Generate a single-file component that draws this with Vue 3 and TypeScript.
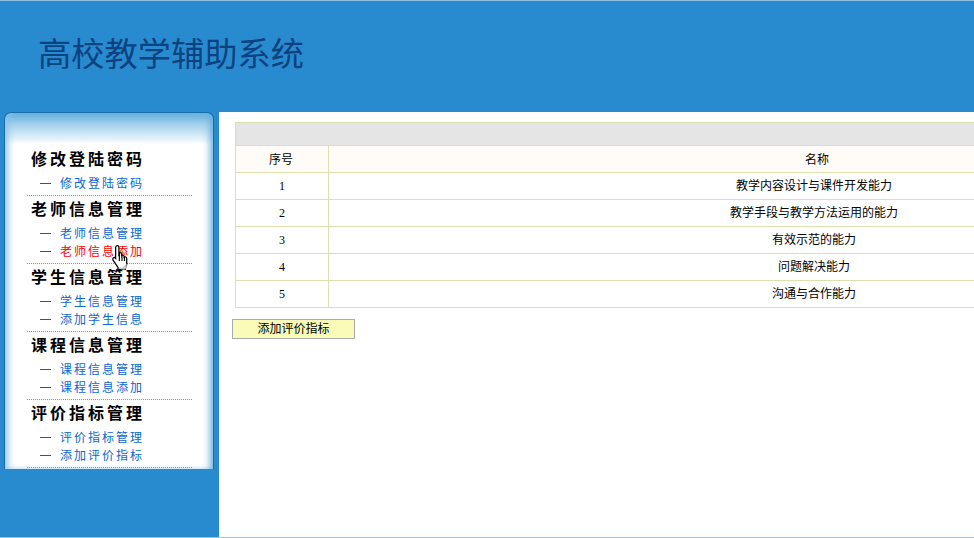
<script setup lang="ts">
interface Group { title: string; items: string[] }
const groups: Group[] = [
  { title: '修改登陆密码', items: ['修改登陆密码'] },
  { title: '老师信息管理', items: ['老师信息管理', '老师信息添加'] },
  { title: '学生信息管理', items: ['学生信息管理', '添加学生信息'] },
  { title: '课程信息管理', items: ['课程信息管理', '课程信息添加'] },
  { title: '评价指标管理', items: ['评价指标管理', '添加评价指标'] },
]
const rows: string[] = [
  '教学内容设计与课件开发能力',
  '教学手段与教学方法运用的能力',
  '有效示范的能力',
  '问题解决能力',
  '沟通与合作能力',
]
const hovered = '老师信息添加'
</script>

<template>
  <div class="page">
    <header class="top">
      <h1 class="title">高校教学辅助系统</h1>
    </header>
    <div class="body">
      <aside class="side">
        <nav class="panel">
          <section v-for="g in groups" :key="g.title" class="group">
            <h2 class="group-title">{{ g.title }}</h2>
            <ul class="links">
              <li v-for="it in g.items" :key="it" class="link" :class="{ hover: it === hovered }">
                <span class="dash"></span>
                <a class="link-text">{{ it }}</a>
              </li>
            </ul>
          </section>
        </nav>
        <svg class="cursor" width="19" height="26" viewBox="0 0 16 23">
          <path d="M5 1.500c1 0 1.600.7 1.600 1.700v7l.4-.2V7.800c1-.6 2 0 2 .9v1.500c1-.7 2.100-.3 2.200.8v.7c1-.6 2.200-.2 2.300.9v5.400c0 1.200-.7 2.300-1.300 3.300v1.200H5.800v-1.700L1.700 14.700c-.8-1-.7-2 .1-2.500.8-.5 1.500-.1 1.900.4V3.200c0-1 .4-1.700 1.300-1.700z" fill="#fff" stroke="#000" stroke-width="1.100"/>
          <path d="M7 10v5M9.300 10.500V15M11.500 11.500V15" stroke="#000" stroke-width="1" fill="none"/>
          <path d="M13.500 17.500v3L12 22.500H8z" fill="#c4c4c4"/>
        </svg>
      </aside>
      <main class="main">
        <table class="grid">
          <colgroup>
            <col class="col-a" />
            <col />
          </colgroup>
          <thead>
            <tr><th colspan="2" class="band"></th></tr>
            <tr class="head"><th class="h-a">序号</th><th class="h-b">名称</th></tr>
          </thead>
          <tbody>
            <tr v-for="(r, i) in rows" :key="r">
              <td class="num">{{ i + 1 }}</td>
              <td class="name">{{ r }}</td>
            </tr>
          </tbody>
        </table>
        <button class="add" type="button">添加评价指标</button>
      </main>
    </div>
  </div>
</template>

<style>
html, body { margin: 0; padding: 0; overflow: hidden; background: #fff; }
</style>

<style scoped>
.page {
  width: 974px;
  height: 538px;
  overflow: hidden;
  display: flex;
  flex-direction: column;
  box-sizing: border-box;
  border-top: 1px solid #8fbfe3;
  border-bottom: 1px solid #a3c1da;
  font-family: "Liberation Serif", "Noto Sans CJK SC", serif;
  background: #fff;
}
.top {
  height: 111px;
  flex: none;
  background: #298bcf;
  display: flex;
  align-items: center;
  padding: 0 0 0 38px;
  box-sizing: border-box;
}
.title {
  margin: 0 0 10px;
  font: 400 33.25px/40px "Noto Sans CJK SC", sans-serif;
  color: #0c4280;
}
.body {
  flex: 1;
  display: flex;
  min-height: 0;
}
.side {
  position: relative;
  width: 219px;
  flex: none;
  background: #298bcf;
  padding-left: 4px;
  box-sizing: border-box;
}
.panel {
  width: 210px;
  height: 357px;
  box-sizing: border-box;
  padding: 33px 21px 0 22px;
  overflow: hidden;
  border: 1px solid #1a6ca6;
  border-bottom: 0;
  border-radius: 7px 7px 0 0;
  background:
    linear-gradient(#fff, #fff) 8px 31px / 192px 100% no-repeat,
    linear-gradient(#62aedd 0, #a6d2ec 12px, #e4f2fa 26px, #fff 31px);
  box-shadow: inset 6px 0 7px -3px #8cc3e8, inset -6px 0 7px -3px #6aaedd;
}
.group {
  border-bottom: 1px dotted #6f9fb5;
  padding-bottom: 3px;
}
.group-title {
  margin: 0;
  height: 28px;
  padding-left: 4px;
  font: 700 16px/24px "Noto Sans CJK SC", sans-serif;
  letter-spacing: 3px;
  color: #000;
}
.links {
  list-style: none;
  margin: 0;
  padding: 0;
}
.link {
  height: 18px;
  display: flex;
  align-items: center;
  color: #0b66d0;
  font: 400 12px/18px "Noto Sans CJK SC", sans-serif;
  letter-spacing: 2px;
}
.dash {
  width: 11px;
  height: 1px;
  margin: 0 9px 0 13px;
  background: #0b5cc0;
}
.link.hover { color: #f00; }
.link.hover .dash { background: #f00; }
.cursor {
  position: absolute;
  left: 111px;
  top: 132px;
}
.main {
  flex: 1;
  min-width: 0;
  padding: 10px 0 0 13px;
  background: #fff;
}
.grid {
  margin-left: 3px;
  width: 1065px;
  border-collapse: collapse;
  table-layout: fixed;
  font: 400 12px/16px "Noto Sans CJK SC", sans-serif;
  color: #000;
}
.col-a { width: 93px; }
.grid th, .grid td {
  border: 1px solid #dbe0ae;
  padding: 0;
  height: 26px;
  text-align: center;
  font-weight: 400;
}
.grid .band {
  height: 22px;
  background: #e5e5e5;
}
.head th { background: #fffcf7; }
.grid .h-a { padding-right: 2px; }
.grid .h-b { padding-left: 6px; }
.grid .name { height: 24px; padding-bottom: 2px; }
.num { font-family: "Liberation Serif", serif; }
.add {
  display: block;
  margin-top: 11px;
  width: 123px;
  height: 20px;
  padding: 0 0 3px;
  box-sizing: border-box;
  border: 1px solid #aaa;
  background: #f9fbb9;
  color: #000;
  font: 400 12px/15px "Noto Sans CJK SC", sans-serif;
}
</style>
